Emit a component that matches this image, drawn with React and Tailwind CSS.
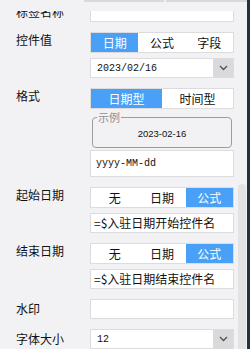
import React from 'react';

const Chevron = () => (
  <svg width="9" height="6" viewBox="0 0 9 6">
    <polyline points="1,1 4.5,4.5 8,1" fill="none" stroke="#505050" strokeWidth="1.3" />
  </svg>
);

const Segmented = ({ options, active }) => (
  <div className="flex h-[21px] border border-[#dcdcde] bg-white">
    {options.map((o, i) => (
      <div
        key={o}
        className={`flex-1 flex items-center justify-center text-[12px] ${
          i === active ? 'bg-[#4a9ff6] text-white' : 'text-[#111]'
        }`}
      >
        {o}
      </div>
    ))}
  </div>
);

const TextBox = ({ value, className = '' }) => (
  <div className={`h-[20px] border border-[#dcdcde] bg-white flex items-center text-[12px] text-[#111] ${className}`}>
    {value}
  </div>
);

const Select = ({ value }) => (
  <div className="h-[20px] border border-[#dcdcde] bg-white flex">
    <div className="flex-1 flex items-center pl-[6px] font-['Liberation_Mono',monospace] text-[10px] text-[#111]">
      {value}
    </div>
    <div className="w-[20px] bg-[#dadadc] flex items-center justify-center">
      <Chevron />
    </div>
  </div>
);

const Row = ({ label, segment = false, children }) => (
  <div className="flex items-start">
    <div
      className={`w-[74px] shrink-0 text-[12px] text-[#111] whitespace-nowrap ${
        segment ? 'leading-[14px] pt-[1px]' : 'leading-[20px]'
      }`}
    >
      {label}
    </div>
    <div className="w-[144px] flex flex-col">{children}</div>
  </div>
);

export default function App() {
  return (
    <div className="w-[250px] h-[349px] overflow-hidden flex bg-[#f2f2f4] font-['Noto_Sans_CJK_SC',sans-serif]">
      <div className="w-[247px] flex flex-col">
        {/* tab bar edge */}
        <div className="h-[11px] shrink-0 flex items-start">
          <div className="w-[84px]" />
          <div className="w-[80px] h-[2px] bg-[#d9d9db]" />
          <div className="w-[2px]" />
          <div className="flex-1 h-[2px] bg-[#d9d9db]" />
        </div>

        <div className="flex-1 flex overflow-hidden">
          <div className="w-[236px] overflow-hidden">
            <div className="-mt-[9px] pl-[16px] flex flex-col gap-[10px]">
              <Row label="标签名称">
                <TextBox value="" />
              </Row>

              <Row label="控件值" segment>
                <Segmented options={['日期', '公式', '字段']} active={0} />
                <div className="mt-[5px]">
                  <Select value="2023/02/16" />
                </div>
              </Row>

              <Row label="格式" segment>
                <Segmented options={['日期型', '时间型']} active={0} />
                <fieldset className="mt-[2px] mx-[2px] h-[37px] border border-[#9c9c9e] rounded-[4px] pl-[4px]">
                  <legend className="px-[1px] text-[11px] leading-[12px] text-[#8e8e90]">示例</legend>
                  <div className="h-[23px] -ml-[4px] flex items-center justify-center font-['Liberation_Sans',sans-serif] text-[9.5px] text-[#111]">
                    2023-02-16
                  </div>
                </fieldset>
                <div className="mt-[2px] h-[27px] border border-[#dcdcde] bg-white flex items-center pl-[5px] font-['Liberation_Mono',monospace] text-[10px] text-[#111]">
                  yyyy-MM-dd
                </div>
              </Row>

              <Row label="起始日期" segment>
                <Segmented options={['无', '日期', '公式']} active={2} />
                <div className="mt-[5px]">
                  <TextBox value="=$入驻日期开始控件名" className="pl-[3px]" />
                </div>
              </Row>

              <Row label="结束日期" segment>
                <Segmented options={['无', '日期', '公式']} active={2} />
                <div className="mt-[5px]">
                  <TextBox value="=$入驻日期结束控件名" className="pl-[3px]" />
                </div>
              </Row>

              <Row label="水印">
                <TextBox value="" />
              </Row>

              <Row label="字体大小">
                <Select value="12" />
              </Row>
            </div>
          </div>

          {/* scrollbar */}
          <div className="w-[11px] flex flex-col">
            <div className="h-[173px] shrink-0" />
            <div className="ml-[2px] w-[8px] flex-1 rounded-t-full bg-[#e3e3e5]" />
          </div>
        </div>
      </div>
      <div className="w-[3px] bg-[#27313c]" />
    </div>
  );
}
